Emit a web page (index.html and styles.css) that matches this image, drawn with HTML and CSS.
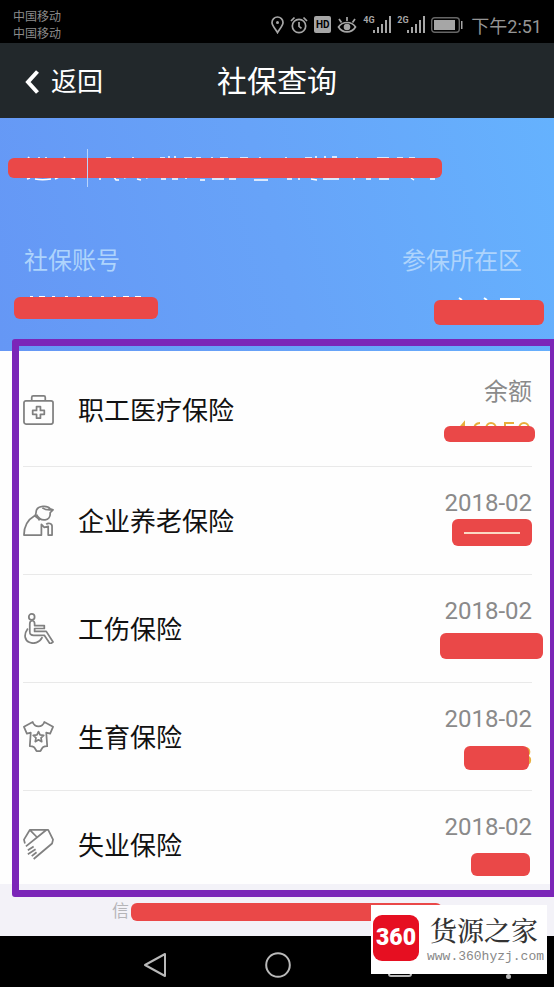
FILE: index.html
```html
<!DOCTYPE html>
<html lang="zh-CN">
<head>
<meta charset="utf-8">
<meta name="viewport" content="width=device-width, initial-scale=1">
<title>社保查询</title>
<link rel="stylesheet" href="styles.css">
</head>
<body>
<div class="screen">
  <div class="status">
    <div class="carriers"><span>中国移动</span><span>中国移动</span></div>
    <div class="indicators">
      <svg width="13" height="18" viewBox="0 0 13 18" fill="none" stroke="currentColor" stroke-width="1.7"><path d="M6.5 16.5C5 13.500 1 10 1 6.500a5.500 5.500 0 0 1 11 0C12 10 8 13.500 6.500 16.500Z"/><circle cx="6.500" cy="6.500" r="1.500" fill="currentColor" stroke="none"/></svg>
      <svg width="18" height="18" viewBox="0 0 18 18" fill="none" stroke="currentColor" stroke-width="1.7"><circle cx="9" cy="10" r="6.700"/><path d="M9 6v4.300l2.500 2M1 5l3.500-3.500M17 5l-3.500-3.500"/></svg>
      <span class="hd">HD</span>
      <svg width="20" height="18" viewBox="0 0 20 18" fill="none" stroke="currentColor" stroke-width="1.700"><path d="M1.500 11c4-6 13-6 17 0-4 6.500-13 6.500-17 0ZM10 5V1M4.500 6.500 2 3M15.500 6.500 18 3"/><circle cx="10" cy="11" r="3.300" fill="currentColor" stroke="none"/></svg>
      <span class="signal"><span>4G</span><svg width="18" height="17" viewBox="0 0 18 17" fill="currentColor"><path d="M0 14h2v3H0zM4 11h2v6H4zM8 8h2v9H8zM12 4h2v13h-2zM16 0h2v17h-2z"/></svg></span>
      <span class="signal"><span>2G</span><svg width="18" height="17" viewBox="0 0 18 17" fill="currentColor"><path d="M0 14h2v3H0zM4 11h2v6H4zM8 8h2v9H8zM12 4h2v13h-2zM16 0h2v17h-2z"/></svg></span>
      <svg width="32" height="16" viewBox="0 0 32 16"><rect x=".7" y=".7" width="27.600" height="14.600" rx="3" fill="none" stroke="#666" stroke-width="1.400"/><path d="M3 3h21v10H3z" fill="currentColor"/><path d="M30 4h1.500v8H30z" fill="currentColor"/></svg>
      <time>下午2:51</time>
    </div>
  </div>

  <header class="bar">
    <a class="back" href="#"><svg width="14" height="24" viewBox="0 0 14 24" fill="none" stroke="currentColor" stroke-width="4"><path d="M12.500 1.500 3 12l9.500 10.500"/></svg>返回</a>
    <h1>社保查询</h1>
  </header>

  <section class="hero">
    <div class="company">
      <svg class="trace" width="420" height="26" viewBox="0 0 420 26" fill="none" stroke="#fff" stroke-width="1.500"><path d="M4 2l2 2M15 2v2M22 2v2M40 2l2 3M82 3h5M109 2v3M136 3h5m4-2v3m6-3v3M160 3h8m4 0h5M188 2v3m8-2h8M216 3h8M236 2v3M262 2v3M281 3h7m4-2v3m9-3v3m7-2h5M333 2v3m20-2h12m8 0h6m6 0h6M3 24l3-1M11 24c5 1 10 1 16 0M31 24l4-2m11 0 5 2M76 22v3m14-3 2 3h3m5-2 3-1m10 2 4 1m5-2 3-1m12 2h5m6 0h6m8 0v-2m14 3h5m7-1h12m5 0h7m18 1h14M263 24h5m7-1v2m12-1 6 1m6-1 16 0M330 23v2m12-1h5m8 0h10m22-1 3 2m16-1h5"/></svg>
      <span class="mask mask-company"></span>
      <i class="rule"></i>
    </div>
    <dl class="account">
      <div>
        <dt>社保账号</dt>
        <dd><svg class="trace" width="120" height="6" viewBox="0 0 120 6" fill="none" stroke="#fff" stroke-width="2"><path d="M6 3h3m6 0h6m7 0h3m10 0h3m9 0h3m9 0h3m9 0h3m9 0h3m7 0h6m6 0h6"/></svg><span class="mask mask-number"></span></dd>
      </div>
      <div class="area">
        <dt>参保所在区</dt>
        <dd><svg class="trace" width="64" height="8" viewBox="0 0 64 8" fill="none" stroke="#fff" stroke-width="2"><path d="M1 4l3 2M26 4l3 2M42 5h20"/></svg><span class="mask mask-area"></span></dd>
      </div>
    </dl>
  </section>

  <main class="list">
    <ul>
      <li>
        <svg class="icon" viewBox="0 0 32 32"><rect x="1" y="7" width="30" height="24" rx="2"/><path d="M9 7V3.500A1.500 1.500 0 0 1 10.500 2h11A1.500 1.500 0 0 1 23 3.500V7M14 13h4v4h4v4h-4v4h-4v-4h-4v-4h4z"/></svg>
        <span class="name">职工医疗保险</span>
        <div class="info"><span>余额</span><div class="amount"><svg class="trace" width="76" height="12" viewBox="0 0 76 12" fill="none" stroke="#e8ae3c" stroke-width="2"><path d="M2 10 8 3v7M18 10c0-4 2-7 6-7M30 9c0-8 10-8 10 0M58 3h-9v8M63 9c0-8 10-8 10 0"/></svg><span class="mask mask-medical"></span></div></div>
      </li>
      <li>
        <svg class="icon" viewBox="0 0 32 32"><path d="M12 11C5 15 1 22 1 31h18V20l3 3 4-1v9h4V22c0-3-4-4-6-2M12 11c2 2 4 2 5 5M12 11c2-1 1-3 2-6 2-4 11-5 14-1l3 1-3 3c1 9-10 10-14 2M20 3c4 3 8 2 11 2"/></svg>
        <span class="name">企业养老保险</span>
        <div class="info"><span>2018-02</span><div class="amount"><span class="mask mask-pension"></span></div></div>
      </li>
      <li>
        <svg class="icon" viewBox="0 0 32 32"><circle cx="9" cy="4" r="3"/><path d="M7 11c0-4 5-4 5 0v2h10v3H12v3h12l7 11-3 2-6-9H11c-4 0-4-2-4-4ZM5 16c-10 14 9 21 15 9"/></svg>
        <span class="name">工伤保险</span>
        <div class="info"><span>2018-02</span><div class="amount"><span class="mask mask-injury"></span></div></div>
      </li>
      <li>
        <svg class="icon" viewBox="0 0 32 32"><path d="M10 1 1 6l3 7 4-1-1 14c5 0 5 2 7 5h4c2-3 2-5 7-5l-1-14 4 1 3-7-9-5c-2 6-10 6-12 0ZM16 11l1.600 3.400 3.800.5-2.800 2.600.7 3.800-3.300-1.900-3.300 1.900.7-3.800-2.800-2.600 3.800-.5Z"/></svg>
        <span class="name">生育保险</span>
        <div class="info"><span>2018-02</span><div class="amount"><svg class="trace trace-edge" width="8" height="22" viewBox="0 0 8 22" fill="none" stroke="#e8ae3c" stroke-width="2"><path d="M1 3c5 0 6 6 1 8 6 1 5 8 0 8"/></svg><span class="mask mask-birth"></span></div></div>
      </li>
      <li>
        <svg class="icon" viewBox="0 0 32 32"><path d="M2 15 1 11 7 1h19l5 10-1 4-19 16M3 18 24 1M7 1l7 7M5 22l6-4M5 26l8-5M9 28l5-4"/></svg>
        <span class="name">失业保险</span>
        <div class="info"><span>2018-02</span><div class="amount"><span class="mask mask-jobless"></span></div></div>
      </li>
    </ul>
    <div class="frame"></div>
  </main>

  <footer class="note"><span>信</span><span class="note-mask"></span></footer>

  <nav class="keys">
    <button aria-label="返回"><svg width="25" height="26" viewBox="0 0 25 26"><path d="M22 2v22L2 13Z"/></svg></button>
    <button aria-label="主页"><svg width="26" height="26" viewBox="0 0 26 26"><circle cx="13" cy="13" r="11.800"/></svg></button>
    <button aria-label="最近任务"><svg width="24" height="24" viewBox="0 0 24 24"><rect x="1" y="1" width="22" height="22" rx="2"/></svg></button>
    <i class="dot"></i>
    <a class="brand" href="#">
      <b class="logo">360</b>
      <span class="brand-text"><strong>货源之家</strong><small>www.360hyzj.com</small></span>
    </a>
  </nav>
</div>
</body>
</html>
```
FILE: styles.css
```css
* { box-sizing: border-box; }
body, h1, ul, dl, dd { margin: 0; padding: 0; }
body {
  background: #000;
  color: #111;
  font-family: Roboto, "Noto Sans CJK SC", sans-serif;
}
.screen {
  min-height: 100vh;
  display: flex;
  flex-direction: column;
  overflow: hidden;
}

/* status bar */
.status {
  height: 43px;
  padding: 6px 12px 0 13px;
  display: flex;
  justify-content: space-between;
  background: #000;
  color: #a6a6a6;
}
.carriers {
  display: flex;
  flex-direction: column;
  font-size: 12px;
  line-height: 17px;
  margin-top: 3px;
  color: #8c8c8c;
}
.indicators {
  display: flex;
  align-items: center;
  gap: 6px;
}
.indicators time {
  font-size: 18px;
  margin-left: 2px;
  color: #959595;
}
.hd {
  width: 17px;
  height: 17px;
  border-radius: 2px;
  background: #a6a6a6;
  color: #000;
  font-size: 10px;
  font-weight: 700;
  line-height: 17px;
  text-align: center;
}
.signal { display: flex; }
.signal span {
  font-size: 9px;
  font-weight: 700;
  line-height: 8px;
  width: 10px;
}

/* title bar */
.bar {
  height: 75px;
  display: grid;
  grid-template-columns: 1fr auto 1fr;
  align-items: center;
  padding: 2px 25px 0;
  background: #22282b;
  color: #fff;
}
.bar h1 {
  font-size: 30px;
  font-weight: 400;
  line-height: 40px;
}
.back {
  display: flex;
  align-items: center;
  gap: 12px;
  color: inherit;
  font-size: 26px;
  line-height: 36px;
  text-decoration: none;
}

/* account summary */
.hero {
  height: 233px;
  padding: 30px 32px 0 24px;
  background: linear-gradient(75deg, #6597f5 0%, #67a3f8 50%, #65b2fe 100%);
}
.company {
  position: relative;
  height: 40px;
}
.rule {
  position: absolute;
  left: 63px;
  top: 1px;
  width: 1px;
  height: 38px;
  background: #b9d4fc;
}
.account {
  display: flex;
  justify-content: space-between;
  margin-top: 55px;
}
.account dt {
  font-size: 24px;
  line-height: 36px;
  color: #aed4fc;
}
.account dd {
  position: relative;
  height: 28px;
  margin-top: 15px;
}
.trace {
  position: absolute;
  left: 0;
  top: 0;
}
.company .trace { top: 7px; }
.area .trace { left: auto; right: 0; }
.mask {
  position: absolute;
  border-radius: 6px;
  background: #ea4848;
}
.mask-company { left: -16px; top: 10px; width: 434px; height: 20px; }
.mask-number { left: -10px; top: 3px; width: 144px; height: 22px; }
.mask-area { right: -22px; top: 6px; width: 110px; height: 25px; }

/* insurance list */
.list {
  position: relative;
  background: #fefefe;
}
.list ul {
  list-style: none;
  padding: 5px 22px 0 23px;
}
.list li {
  height: 108px;
  display: flex;
  align-items: flex-start;
  border-bottom: 1px solid #e9e9e9;
}
.list li:first-child { height: 111px; }
.list li:last-child {
  height: 93px;
  border-bottom: 0;
}
.icon {
  width: 31px;
  height: 31px;
  margin: 38px 24px 0 0;
  fill: none;
  stroke: #808080;
  stroke-width: 1.8;
  stroke-linejoin: round;
}
.name {
  flex: 1;
  margin-top: 37px;
  font-size: 26px;
  line-height: 36px;
}
.info {
  margin-top: 20px;
  text-align: right;
  font-size: 24px;
  line-height: 32px;
  color: #8a8a8a;
}
.amount {
  position: relative;
  height: 34px;
}
.amount .trace { left: auto; right: 0; top: 12px; }
.amount .trace-edge { top: 10px; }
.mask-medical { right: -3px; top: 18px; width: 91px; height: 16px; }
.mask-pension { right: 0; top: 0; width: 80px; height: 27px; }
.mask-pension::after {
  content: "";
  position: absolute;
  left: 12px;
  right: 12px;
  top: 13px;
  height: 2px;
  background: #fbd9c4;
}
.mask-injury { right: -11px; top: 6px; width: 103px; height: 26px; }
.mask-birth { right: 3px; top: 11px; width: 65px; height: 24px; }
.mask-jobless { right: 2px; top: 10px; width: 59px; height: 23px; }
.frame {
  position: absolute;
  left: 12px;
  right: -3px;
  top: -12px;
  bottom: -13px;
  border: 7px solid #7b26b8;
  border-radius: 3px;
}

/* footnote */
.note {
  flex: 1;
  min-height: 52px;
  padding: 15px 112px 0;
  display: flex;
  align-items: flex-start;
  gap: 2px;
  background: #f3f2f8;
  color: #b5b5b8;
  font-size: 17px;
  line-height: 24px;
}
.note-mask {
  flex: 1;
  height: 18px;
  margin-top: 4px;
  border-radius: 6px;
  background: #ea4848;
}

/* system keys */
.keys {
  position: relative;
  height: 51px;
  padding-top: 6px;
  display: flex;
  align-items: center;
  justify-content: center;
  gap: 97px;
  background: #000;
}
.keys button {
  display: flex;
  padding: 0;
  border: 0;
  background: none;
}
.keys svg {
  fill: none;
  stroke: #b9b9b9;
  stroke-width: 2;
  stroke-linejoin: round;
}
.dot {
  position: absolute;
  right: 43px;
  bottom: 8px;
  width: 5px;
  height: 5px;
  border-radius: 50%;
  background: #b9b9b9;
}
.brand {
  position: absolute;
  right: 7px;
  bottom: 13px;
  width: 176px;
  height: 69px;
  padding: 10px 0 0 2px;
  display: flex;
  gap: 8px;
  background: #fff;
  color: #333;
  text-decoration: none;
}
.logo {
  width: 46px;
  height: 46px;
  border-radius: 9px;
  background: #e60f21;
  color: #fff;
  font-size: 23px;
  font-weight: 900;
  line-height: 46px;
  text-align: center;
}
.brand-text {
  display: flex;
  flex-direction: column;
  margin-top: -4px;
}
.brand-text strong {
  padding-left: 3px;
  font-family: "Noto Serif CJK SC", "Noto Sans CJK SC", serif;
  font-size: 27px;
  font-weight: 500;
  line-height: 38px;
}
.brand-text small {
  font-family: "Liberation Mono", monospace;
  font-size: 13px;
  line-height: 16px;
  color: #888;
}
```
